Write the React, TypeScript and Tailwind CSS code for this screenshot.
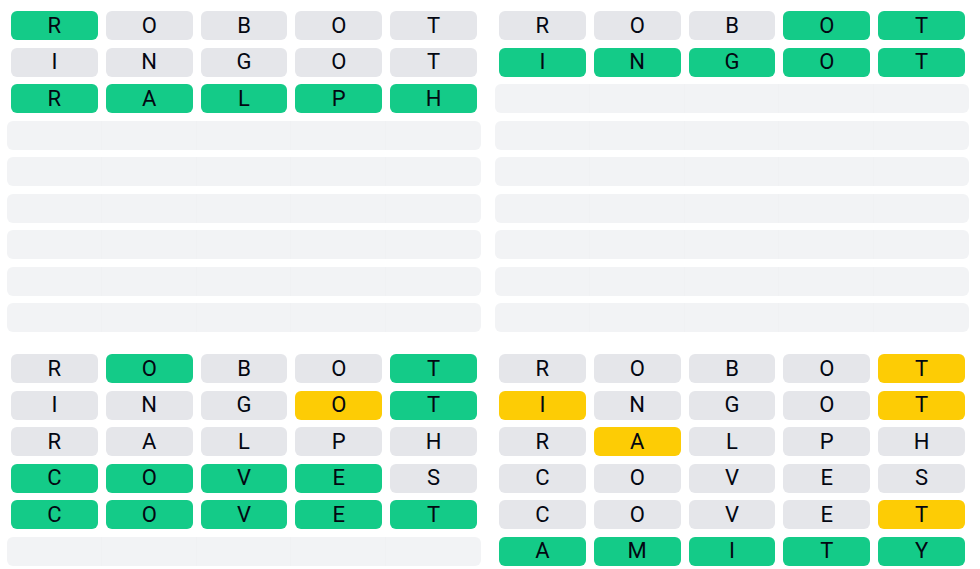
type Mark = 'g' | 'y' | 'n';

type Guess = { word: string; marks: string };

const boards: Guess[][] = [
  [
    { word: 'ROBOT', marks: 'gnnnn' },
    { word: 'INGOT', marks: 'nnnnn' },
    { word: 'RALPH', marks: 'ggggg' },
  ],
  [
    { word: 'ROBOT', marks: 'nnngg' },
    { word: 'INGOT', marks: 'ggggg' },
  ],
  [
    { word: 'ROBOT', marks: 'ngnng' },
    { word: 'INGOT', marks: 'nnnyg' },
    { word: 'RALPH', marks: 'nnnnn' },
    { word: 'COVES', marks: 'ggggn' },
    { word: 'COVET', marks: 'ggggg' },
  ],
  [
    { word: 'ROBOT', marks: 'nnnny' },
    { word: 'INGOT', marks: 'ynnny' },
    { word: 'RALPH', marks: 'nynnn' },
    { word: 'COVES', marks: 'nnnnn' },
    { word: 'COVET', marks: 'nnnny' },
    { word: 'AMITY', marks: 'ggggg' },
  ],
];

const tileColor: Record<Mark, string> = {
  g: 'bg-[#14cb88]',
  y: 'bg-[#fdcc05]',
  n: 'bg-[#e5e6ea]',
};

const FilledRow = ({ word, marks }: Guess) => (
  <div className="grid grid-cols-5 grid-rows-[29px] h-[29px]">
    {word.split('').map((ch, i) => (
      <div
        key={i}
        className={`mx-1 rounded-[6px] flex items-center justify-center text-[22px] leading-none text-gray-950 ${tileColor[marks[i] as Mark]}`}
      >
        {ch}
      </div>
    ))}
  </div>
);

const EmptyRow = () => (
  <div className="grid grid-cols-5 grid-rows-[29px] h-[29px]">
    <div className="bg-[#f2f3f5] rounded-l-[6px] border-r border-[#f0f1f3]" />
    <div className="bg-[#f2f3f5] border-r border-[#f0f1f3]" />
    <div className="bg-[#f2f3f5] border-r border-[#f0f1f3]" />
    <div className="bg-[#f2f3f5] border-r border-[#f0f1f3]" />
    <div className="bg-[#f2f3f5] rounded-r-[6px]" />
  </div>
);

const Board = ({ guesses }: { guesses: Guess[] }) => (
  <div className="flex flex-col gap-[7.5px]">
    {guesses.map((g, i) => (
      <FilledRow key={i} word={g.word} marks={g.marks} />
    ))}
    {Array.from({ length: 9 - guesses.length }).map((_, i) => (
      <EmptyRow key={`e${i}`} />
    ))}
  </div>
);

export default function App() {
  return (
    <div
      className="w-[980px] h-[569px] overflow-hidden bg-white pl-[7px] pt-[11px]"
      style={{ fontFamily: 'Roboto, "Liberation Sans", sans-serif' }}
    >
      <div className="grid grid-cols-[474px_474px] gap-x-[14px] gap-y-[22px]">
        {boards.map((b, i) => (
          <Board key={i} guesses={b} />
        ))}
      </div>
    </div>
  );
}
